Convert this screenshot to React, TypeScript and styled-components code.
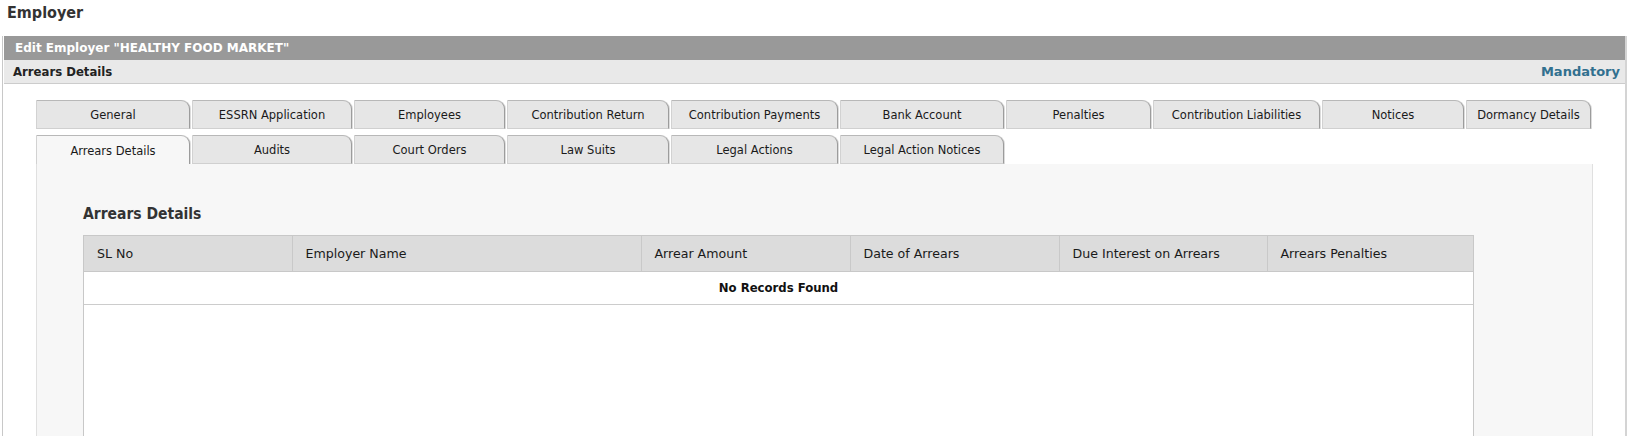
import React from "react";
import styled, { createGlobalStyle } from "styled-components";

const GlobalStyle = createGlobalStyle`
  html, body {
    margin: 0;
    padding: 0;
    background: #ffffff;
    font-family: "DejaVu Sans", Verdana, sans-serif;
    color: #222222;
    overflow: hidden;
  }
`;

const condensed = `"DejaVu Sans Condensed", "DejaVu Sans", Verdana, sans-serif`;

const Page = styled.div`
  padding: 0 7px 0 2px;
`;

const PageTitle = styled.h1`
  margin: 0;
  height: 36px;
  box-sizing: border-box;
  padding: 3px 0 0 5px;
  font-family: ${condensed};
  font-stretch: condensed;
  font-size: 16px;
  line-height: 20px;
  font-weight: bold;
  color: #333333;
`;

const Frame = styled.div`
  border-left: 1px solid #c8c8c8;
  border-right: 2px solid #d4d4d4;
  padding: 0 0 0 1px;
`;

const TitleBar = styled.div`
  height: 24px;
  line-height: 24px;
  background: #999999;
  color: #ffffff;
  font-size: 12px;
  font-weight: bold;
  padding-left: 11px;
`;

const SubBar = styled.div`
  height: 23px;
  background: #e9e9e9;
  border-bottom: 1px solid #cccccc;
  display: flex;
  align-items: center;
  justify-content: space-between;
  padding: 0 5px 0 9px;
  font-size: 13px;
  font-weight: bold;
`;

const SubTitle = styled.span`
  font-family: ${condensed};
  font-stretch: condensed;
  font-size: 13px;
  color: #222222;
`;

const Mandatory = styled.span`
  color: #31708f;
`;

const Body = styled.div`
  padding: 16px 32px 0 32px;
`;

const TabRow = styled.div<{ $gapBelow: number }>`
  display: grid;
  grid-template-columns: 154px 160px 151px 162px 167px 164px 145px 167px 142px 125px;
  column-gap: 2px;
  margin-bottom: ${(p) => p.$gapBelow}px;
`;

const Tab = styled.div<{ $active?: boolean }>`
  height: 29px;
  box-sizing: border-box;
  display: flex;
  align-items: center;
  justify-content: center;
  font-size: 11.5px;
  color: #1a1a1a;
  white-space: nowrap;
  background: ${(p) => (p.$active ? "#f7f7f7" : "#e6e6e6")};
  border-top: 1px solid #b8b8b8;
  border-left: 1px solid #d2d2d2;
  border-right: 1px solid #9c9c9c;
  border-bottom: ${(p) => (p.$active ? "none" : "1px solid #d0d0d0")};
  border-top-right-radius: 9px;
  box-shadow: 1px 0 0 #dcdcdc;
  padding-top: ${(p) => (p.$active ? "2px" : "0")};
`;

const Panel = styled.div`
  background: #f7f7f7;
  border-left: 1px solid #e0e0e0;
  border-right: 1px solid #e0e0e0;
  padding: 40px 0 0 46px;
  min-height: 300px;
`;

const SectionTitle = styled.h2`
  margin: 0 0 11px 0;
  font-family: ${condensed};
  font-stretch: condensed;
  font-size: 15.5px;
  line-height: 20px;
  font-weight: bold;
  color: #333333;
`;

const TableBox = styled.div`
  width: 1391px;
  box-sizing: border-box;
  background: #ffffff;
  border: 1px solid #c8c8c8;
  min-height: 260px;
`;

const Table = styled.table`
  width: 100%;
  border-collapse: collapse;
  table-layout: fixed;
`;

const HeadCell = styled.th`
  height: 35px;
  box-sizing: border-box;
  background: #dcdcdc;
  border-left: 1px solid #c9c9c9;
  border-bottom: 1px solid #c8c8c8;
  text-align: left;
  padding: 0 0 0 13px;
  font-size: 12.6px;
  font-weight: normal;
  color: #1a1a1a;
  &:first-child {
    border-left: none;
  }
`;

const EmptyCell = styled.td`
  height: 30px;
  border-bottom: 1px solid #cccccc;
  text-align: center;
  font-size: 11.7px;
  font-weight: bold;
  color: #111111;
`;

const row1 = [
  "General",
  "ESSRN Application",
  "Employees",
  "Contribution Return",
  "Contribution Payments",
  "Bank Account",
  "Penalties",
  "Contribution Liabilities",
  "Notices",
  "Dormancy Details",
];

const row2 = [
  "Arrears Details",
  "Audits",
  "Court Orders",
  "Law Suits",
  "Legal Actions",
  "Legal Action Notices",
];

const columns = [
  { label: "SL No", width: 208 },
  { label: "Employer Name", width: 349 },
  { label: "Arrear Amount", width: 209 },
  { label: "Date of Arrears", width: 209 },
  { label: "Due Interest on Arrears", width: 208 },
  { label: "Arrears Penalties", width: 206 },
];

export default function App() {
  return (
    <>
      <GlobalStyle />
      <Page>
        <PageTitle>Employer</PageTitle>
        <Frame>
          <TitleBar>Edit Employer "HEALTHY FOOD MARKET"</TitleBar>
          <SubBar>
            <SubTitle>Arrears Details</SubTitle>
            <Mandatory>Mandatory</Mandatory>
          </SubBar>
          <Body>
            <TabRow $gapBelow={6}>
              {row1.map((t) => (
                <Tab key={t}>{t}</Tab>
              ))}
            </TabRow>
            <TabRow $gapBelow={0}>
              {row2.map((t, i) => (
                <Tab key={t} $active={i === 0}>
                  {t}
                </Tab>
              ))}
            </TabRow>
            <Panel>
              <SectionTitle>Arrears Details</SectionTitle>
              <TableBox>
                <Table>
                  <colgroup>
                    {columns.map((c) => (
                      <col key={c.label} style={{ width: c.width }} />
                    ))}
                  </colgroup>
                  <thead>
                    <tr>
                      {columns.map((c) => (
                        <HeadCell key={c.label}>{c.label}</HeadCell>
                      ))}
                    </tr>
                  </thead>
                  <tbody>
                    <tr>
                      <EmptyCell colSpan={6}>No Records Found</EmptyCell>
                    </tr>
                  </tbody>
                </Table>
              </TableBox>
            </Panel>
          </Body>
        </Frame>
      </Page>
    </>
  );
}
